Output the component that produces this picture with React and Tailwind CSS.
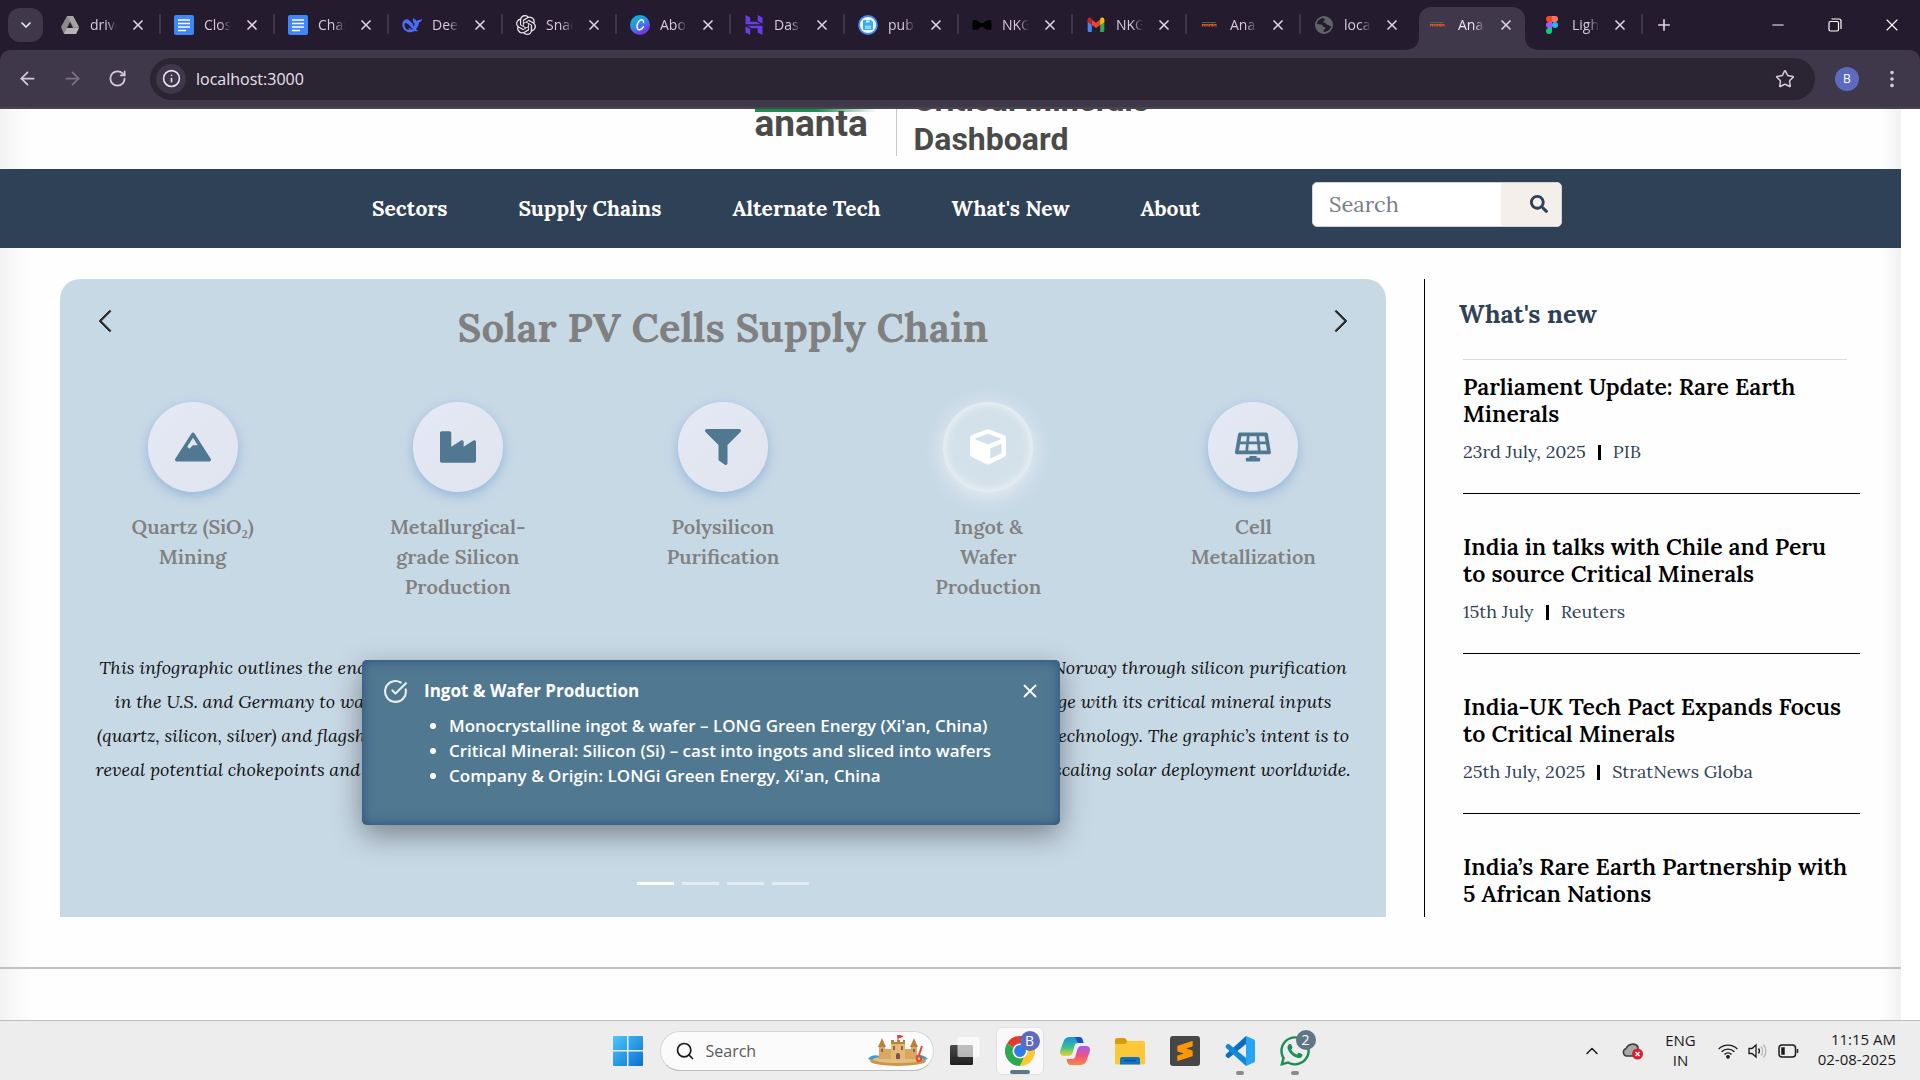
import React from "react";
import { FaCube, FaFilter, FaIndustry, FaMountain, FaSearch, FaSolarPanel, FaWhatsapp } from "react-icons/fa";
import { BsChevronLeft, BsChevronRight } from "react-icons/bs";
import { SiHostinger, SiOpenai, SiSublimetext } from "react-icons/si";
import {
  ArrowLeft, ArrowRight, ChevronDown, ChevronUp, CircleCheckBig, EllipsisVertical,
  Info, Minus, Plus, RotateCw, Search, Star, X,
} from "lucide-react";

const SERIF = "font-['Lora','Liberation_Serif',serif]";
const SANS = "font-['Segoe_UI','Open_Sans',sans-serif]";

/* ---------- favicons ---------- */

const DriveIcon = () => (
  <svg viewBox="0 0 20 20" className="size-5">
    <path d="M7 1h6l6 11-3 7H4l-3-7z" fill="#8b8b8b" />
    <path d="M7 1h6l6 11h-5z" fill="#a5a5a3" />
    <path d="M4 19 7 13h12l-3 6z" fill="#b5b5b2" />
    <path d="M10 7l3 6H7z" fill="#241c2e" />
  </svg>
);

const DocsIcon = () => (
  <svg viewBox="0 0 20 20" className="size-5">
    <rect width="20" height="20" rx="2" fill="#4285f4" />
    <path d="M4 5h12M4 8.500h12M4 12h12M4 15.500h8" stroke="#fff" strokeWidth="1.700" />
  </svg>
);

const WhaleIcon = () => (
  <svg viewBox="0 0 24 24" className="size-5" fill="#4d6bfe">
    <path d="M23.700 4.900c-.3-.1-.4.1-.5.200-.7.700-1.500 1-2.500.900-1.400-.1-2.600.4-3.700 1.500-.2-1.300-1-2.100-2.100-2.600-.6-.3-.9-.7-1-1.300-.1-.3-.3-.2-.4 0-.5 1-.7 2-.5 3.100.1 1.500.8 2.700 2 3.500.2.100.2.200.1.400l-.3 1c-1.100-.5-2-1.100-2.800-1.900C10.600 8.300 9.200 6.600 7.500 5.300 4.600 4.200 1.500 6 .6 9.500c-1.100 4.600 1.600 9.100 5.600 10.500 3 1.100 6.100.6 8.700-.9.600.3 2.400.6 3.500.3.800-.2.800-1 .5-1.100-2.300-1.100-1.800-.7-2.300-1.100 1.200-1.400 3-3.200 3.700-7.500.1-.4 0-.6 0-.8 1.800-.2 3.100-1.700 3.600-3.200.1-.4.100-.7-.2-.8zM12 17.600c-2.300-1.900-3.500-2.500-4-2.400-.4 0-.3.500-.2.800.2.800.8 1.400 1.200 2-2.400.3-4.500-1.400-5.400-3.600C2.800 12.200 3 9.900 4 9.500c2.500-.2 5.600 3.300 8.800 7.300.1.500-.3.900-.8.800zm1.400-5.700c-.6-.1-.7-.9-.2-1.200 1.200 0 1.700 1.300 1.600 2.400-.1 1-1.100.8-1.100.1z" />
  </svg>
);

const CanvaIcon = () => (
  <svg viewBox="0 0 20 20" className="size-5">
    <defs>
      <linearGradient id="canva" x1="0" y1="0" x2=".6" y2="1">
        <stop offset="0" stopColor="#00c4cc" />
        <stop offset=".5" stopColor="#2f8fe6" />
        <stop offset="1" stopColor="#7d2ae8" />
      </linearGradient>
    </defs>
    <circle cx="10" cy="10" r="10" fill="url(#canva)" />
    <path d="M13.500 7.500c.5-3-2-3.500-4-1.800-2.500 2.200-3.500 7-1.500 8.600 1.600 1.200 4-.3 5.300-2.500" fill="none" stroke="#fff" strokeWidth="1.500" strokeLinecap="round" />
  </svg>
);

const DiskIcon = () => (
  <svg viewBox="0 0 20 20" className="size-5">
    <circle cx="10" cy="10" r="9" fill="#f4f4f4" stroke="#3f8cf0" strokeWidth="1.800" />
    <path d="M5 6a1 1 0 0 1 1-1h7l2 2v7a1 1 0 0 1-1 1H6a1 1 0 0 1-1-1z" fill="#35aef0" />
    <path d="M8 5.500h3.500v2H8z" fill="#e3f5fd" />
    <path d="M7 10.500h6V14H7z" fill="#8fd3f7" />
  </svg>
);

const BowTieIcon = () => (
  <svg viewBox="0 0 20 20" className="size-5">
    <path d="M1 5c3-.5 6 1 8 3h2c2-2 5-3.500 8-3 .8 3 .8 7 0 10-3 .5-6-1-8-3H9c-2 2-5 3.500-8 3-.8-3-.8-7 0-10z" fill="#000" />
  </svg>
);

const GmailIcon = () => (
  <svg viewBox="0 0 24 24" className="size-5">
    <path d="M2 6v13a1.500 1.500 0 0 0 1.500 1.500H7V10z" fill="#4285f4" />
    <path d="M22 6v13a1.500 1.500 0 0 1-1.500 1.500H17V10z" fill="#34a853" />
    <path d="M7 5.500V12l5 3.700 5-3.700V5.500l-5 3.800z" fill="#ea4335" />
    <path d="M2 5.500c0-2.300 2.500-3.100 4-2l1 .8V12L2 8.300z" fill="#c5221f" />
    <path d="M22 5.500c0-2.300-2.500-3.100-4-2l-1 .8V12l5-3.700z" fill="#fbbc04" />
  </svg>
);

const AnantaIcon = () => (
  <svg viewBox="0 0 20 20" className="size-5">
    <path d="M2 7.500h14" stroke="#1f7a4a" strokeWidth="1" />
    <path d="M2.500 11.500v-2h2v2m1.500 0v-2h2v2m1.500 0v-2h2v2m1-3v3m1.500 0v-2h2v2" fill="none" stroke="#d9532c" strokeWidth="1.200" />
  </svg>
);

const GlobeIcon = () => (
  <svg viewBox="0 0 20 20" className="size-5">
    <circle cx="10" cy="10" r="9" fill="#5f6368" />
    <path d="M9 3c-3 .5-6 3-6 6l4 .5c2 .3 1.500 2.500 3.500 2.500 1.500.2 1 2-.5 2.500l-.5 2.500c4 0 7-2.500 7.500-6-2 .5-2.500-1.500-4-1.500s-1-2-3-2c-1 0-1.500-1 0-1.500S11 4 9 3z" fill="#241c2e" />
  </svg>
);

const FigmaIcon = () => (
  <svg viewBox="0 0 20 20" className="size-5">
    <path d="M10 1H7a3 3 0 0 0 0 6h3z" fill="#f24e1e" />
    <path d="M10 1h3a3 3 0 0 1 0 6h-3z" fill="#ff7262" />
    <path d="M10 7H7a3 3 0 0 0 0 6h3z" fill="#a259ff" />
    <circle cx="13" cy="10" r="3" fill="#1abcfe" />
    <path d="M10 13H7a3 3 0 1 0 3 3z" fill="#0acf83" />
  </svg>
);

const TABS = [
  { title: "drive", icon: <DriveIcon /> },
  { title: "Closi", icon: <DocsIcon /> },
  { title: "Chat", icon: <DocsIcon /> },
  { title: "Deep", icon: <WhaleIcon /> },
  { title: "Snac", icon: <SiOpenai className="size-5 text-[#e8e4ea]" /> },
  { title: "Abo", icon: <CanvaIcon /> },
  { title: "Das", icon: <SiHostinger className="size-5 text-[#673de6]" /> },
  { title: "pub", icon: <DiskIcon /> },
  { title: "NKG", icon: <BowTieIcon /> },
  { title: "NKG", icon: <GmailIcon /> },
  { title: "Ana", icon: <AnantaIcon /> },
  { title: "local", icon: <GlobeIcon /> },
  { title: "Ana", icon: <AnantaIcon />, active: true },
  { title: "Light", icon: <FigmaIcon /> },
];

function Tab({ title, icon, active, divider }) {
  return (
    <div className="relative flex h-full w-[114px] items-center pt-[7px]">
      {active && (
        <svg viewBox="0 0 136 43" className="absolute -left-[11px] bottom-0 h-[43px] w-[136px]" fill="#3f374a">
          <path d="M0 43c10 0 15-5 15-14V13C15 5 20 0 28 0h80c8 0 13 5 13 13v16c0 9 5 14 15 14z" />
        </svg>
      )}
      <div className="relative flex h-9 w-full items-center pb-[7px] pl-[13px]">
        <span className="shrink-0">{icon}</span>
        <span className={`ml-[10px] w-[27px] overflow-hidden text-[14px] leading-5 whitespace-nowrap [mask-image:linear-gradient(to_right,black_60%,transparent)] ${active ? "text-[#eee6f5]" : "text-[#d5cbdc]"}`}>
          {title}
        </span>
        <button aria-label={`Close ${title}`} className="ml-[13px] flex size-4 items-center justify-center text-[#ddd3e4]">
          <X size={16} strokeWidth={2.500} />
        </button>
      </div>
      {divider && <span className="absolute top-[14px] right-0 h-5 w-[2px] rounded bg-[#3f374a]" />}
    </div>
  );
}

function Browser() {
  return (
    <div className={`${SANS} bg-[#241c2e]`}>
      <div className="flex h-[50px] items-start">
        <button aria-label="Search tabs" className="mt-2 mr-1 ml-2 flex h-[34px] w-[35px] shrink-0 items-center justify-center rounded-xl bg-[#3f374a] text-[#eee6f5]">
          <ChevronDown size={16} strokeWidth={2.500} />
        </button>
        <div className="flex h-full shrink-0">
          {TABS.map((t, i) => (
            <Tab key={i} {...t} divider={i !== 11 && i !== 12} />
          ))}
        </div>
        <button aria-label="New tab" className="mt-4 ml-3 text-[#ddd3e4]">
          <Plus size={18} strokeWidth={2.200} />
        </button>
        <div className="flex h-full flex-1 justify-end text-white">
          <button aria-label="Minimize" className="flex w-[57px] items-center justify-center">
            <Minus size={18} strokeWidth={1.300} />
          </button>
          <button aria-label="Restore" className="flex w-[57px] items-center justify-center">
            <svg viewBox="0 0 14 14" className="size-[14px]" fill="none" stroke="currentColor" strokeWidth="1.200">
              <rect x="1" y="3.500" width="9.500" height="9.500" rx="1.500" />
              <path d="M3.500 1H11a2 2 0 0 1 2 2v8" />
            </svg>
          </button>
          <button aria-label="Close window" className="flex w-[57px] items-center justify-center">
            <X size={20} strokeWidth={1.300} />
          </button>
        </div>
      </div>

      <div className="flex h-[59px] items-center rounded-t-[10px] border-b-2 border-[#4a4450] bg-[#3f374a] px-[17px] text-[#d5cbdc]">
        <button aria-label="Back"><ArrowLeft size={21} strokeWidth={2} /></button>
        <button aria-label="Forward" className="ml-[24px] text-[#7b7284]"><ArrowRight size={21} strokeWidth={2} /></button>
        <button aria-label="Reload" className="ml-[25px]"><RotateCw size={19} strokeWidth={2.200} /></button>
        <div className="ml-[23px] flex h-[42px] flex-1 items-center rounded-full bg-[#2b2433] pr-[20px] pl-[6px]">
          <button aria-label="Site information" className="flex size-[30px] items-center justify-center rounded-full bg-[#3f374a] text-[#eee6f5]">
            <Info size={19} strokeWidth={2} />
          </button>
          <input aria-label="Address" defaultValue="localhost:3000" className="ml-[10px] min-w-0 flex-1 bg-transparent text-[16px] text-[#e9e2ee] outline-none" />
          <button aria-label="Bookmark"><Star size={20} strokeWidth={1.800} /></button>
        </div>
        <button aria-label="Profile" className="ml-5 flex size-6 items-center justify-center rounded-full bg-[#5c6bc0] text-[12px] text-white">B</button>
        <button aria-label="Menu" className="ml-[22px]"><EllipsisVertical size={22} /></button>
      </div>
    </div>
  );
}

/* ---------- site ---------- */

function Header() {
  return (
    <header className="flex h-[60px] items-end justify-center overflow-hidden">
      <div className="mb-[13px] ml-[38px] flex h-[80px] w-[430px] shrink-0 items-end">
        <div className="mb-[20px] w-[122px]">
          <div className="h-[2px] bg-gradient-to-r from-[#e8935a] via-[#e8935a] to-transparent" />
          <div className="h-[3px] bg-gradient-to-r from-[#12924a] via-[#12924a] to-transparent" />
          <div className="font-['Roboto',sans-serif] text-[37px] leading-[24px] font-bold text-[#4a4a48]">ananta</div>
        </div>
        <div className="ml-[19px] h-full w-px bg-[#c9c9c9]" />
        <h1 className="-mb-[3px] ml-[17px] font-['Roboto',sans-serif] text-[32px] leading-[39px] font-bold text-[#4a4a48]">
          Critical Minerals
          <br />
          Dashboard
        </h1>
      </div>
    </header>
  );
}

const NAV = ["Sectors", "Supply Chains", "Alternate Tech", "What's New", "About"];

function Nav() {
  return (
    <nav className={`${SERIF} flex h-[79px] items-center justify-center bg-[#2f4156]`}>
      <div className="ml-[33px] flex items-center">
        <div className="flex gap-[71px] text-[21px] font-bold text-white">
          {NAV.map((n) => (
            <a key={n} href="#" className="whitespace-nowrap">{n}</a>
          ))}
        </div>
        <form className="mb-[9px] ml-[112px] flex h-[45px] w-[250px] overflow-hidden rounded-[5px] border border-[#ced4da] bg-white" onSubmit={(e) => e.preventDefault()}>
          <input aria-label="Search" placeholder="Search" className="w-[188px] px-4 text-[22px] outline-none placeholder:text-[#757d85]" />
          <button aria-label="Submit search" className="flex flex-1 items-center justify-center bg-[#f5efeb] pl-4 text-[#2f4156]">
            <FaSearch size={18} />
          </button>
        </form>
      </div>
    </nav>
  );
}

const STAGES = [
  { Icon: FaMountain, lines: ["Quartz (SiO₂)", "Mining"] },
  { Icon: FaIndustry, lines: ["Metallurgical-", "grade Silicon", "Production"] },
  { Icon: FaFilter, lines: ["Polysilicon", "Purification"] },
  { Icon: FaCube, lines: ["Ingot &", "Wafer", "Production"], active: true },
  { Icon: FaSolarPanel, lines: ["Cell", "Metallization"] },
];

const DESCRIPTION = [
  "This infographic outlines the end-to-end solar PV supply chain, tracing the paths of materials from quartz mining in Norway through silicon purification",
  "in the U.S. and Germany to wafer and cell production in China and beyond the region, and so it pairs each single stage with its critical mineral inputs",
  "(quartz, silicon, silver) and flagship companies, so that readers can readily see who controls each principal step of the technology. The graphic’s intent is to",
  "reveal potential chokepoints and strategic dependencies, and helps to inform both policy and investment decisions for scaling solar deployment worldwide.",
];

function Popup() {
  return (
    <div
      role="dialog"
      aria-label="Ingot & Wafer Production"
      className={`${SANS} absolute top-[381px] left-[302px] h-[165px] w-[698px] rounded-[5px] bg-[#507891] pt-[18px] pr-[19px] pl-[21px] font-semibold text-white shadow-[0_10px_30px_rgba(0,0,0,0.4),inset_0_0_12px_#2a5080]`}
    >
      <div className="flex items-center">
        <CircleCheckBig size={25} strokeWidth={2} className="text-[#e8eef2]" />
        <h3 className="ml-4 flex-1 text-[17px] leading-[26px] font-bold">Ingot &amp; Wafer Production</h3>
        <button aria-label="Close"><X size={22} strokeWidth={2} /></button>
      </div>
      <ul className="mt-[9px] list-disc pl-[66px] text-[17px] leading-[25px]">
        <li>Monocrystalline ingot &amp; wafer – LONG Green Energy (Xi'an, China)</li>
        <li>Critical Mineral: Silicon (Si) – cast into ingots and sliced into wafers</li>
        <li>Company &amp; Origin: LONGi Green Energy, Xi'an, China</li>
      </ul>
    </div>
  );
}

function Carousel() {
  return (
    <section className={`${SERIF} relative flex min-h-[638px] flex-col rounded-t-[20px] bg-[#c8d9e6]`}>
      <div className="flex items-start justify-between px-[32px] pt-[20px]">
        <button aria-label="Previous" className="mt-[9px] text-[#2a2a2a]"><BsChevronLeft size={26} className="stroke-current stroke-[0.6]" /></button>
        <h2 className="pt-[3px] text-[40px] leading-[52px] font-bold text-[#808080]">Solar PV Cells Supply Chain</h2>
        <button aria-label="Next" className="mt-[9px] text-[#2a2a2a]"><BsChevronRight size={26} className="stroke-current stroke-[0.6]" /></button>
      </div>
      <div className="mt-[48px] grid grid-cols-5">
        {STAGES.map(({ Icon, lines, active }) => (
          <button key={lines[0]} className="flex flex-col items-center">
            <span
              className={
                active
                  ? "flex size-[90px] items-center justify-center rounded-full bg-[#d3e1ea] text-white shadow-[0_4px_20px_rgba(255,255,255,0.6),inset_0_0_12px_rgba(255,255,255,0.8)]"
                  : "flex size-[90px] items-center justify-center rounded-full bg-gradient-to-br from-[#e4e9f6] to-[#e0e4ed] text-[#507891] shadow-[0_4px_12px_rgba(100,150,210,0.5)]"
              }
            >
              <Icon size={36} />
            </span>
            <span className="mt-5 text-[20px] leading-[30px] font-semibold text-[#808080]">
              {lines.map((l) => (
                <span key={l} className="block">{l}</span>
              ))}
            </span>
          </button>
        ))}
      </div>
      <p className="absolute top-[372px] right-0 left-0 text-center text-[18px] leading-[34px] text-[#111] italic">
        {DESCRIPTION.map((l) => (
          <span key={l} className="block whitespace-nowrap">{l}</span>
        ))}
      </p>
      <div className="mt-auto mb-[32px] flex justify-center gap-2">
        {[0, 1, 2, 3].map((i) => (
          <button key={i} aria-label={`Slide ${i + 1}`} className={`h-[3px] w-[37px] ${i === 0 ? "bg-white" : "bg-white/50"}`} />
        ))}
      </div>
      <Popup />
    </section>
  );
}

const NEWS = [
  { title: ["Parliament Update: Rare Earth", "Minerals"], date: "23rd July, 2025", source: "PIB" },
  { title: ["India in talks with Chile and Peru", "to source Critical Minerals"], date: "15th July", source: "Reuters" },
  { title: ["India-UK Tech Pact Expands Focus", "to Critical Minerals"], date: "25th July, 2025", source: "StratNews Globa" },
  { title: ["India’s Rare Earth Partnership with", "5 African Nations"] },
];

function News() {
  return (
    <aside className={`${SERIF} border-l border-black pr-[41px] pl-[38px]`}>
      <h2 className="-ml-1 pt-[18px] text-[25px] leading-[34px] font-bold text-[#2f4156]">What's new</h2>
      <div className="mt-[28px] mr-[13px] h-px bg-[#dcdcdc]" />
      {NEWS.map((n, i) => (
        <article key={n.date || i} className={`${i === 0 ? "pt-[13px]" : "pt-[39px]"} ${n.date ? "border-b border-black pb-[29px]" : ""}`}>
          <h3 className="text-[23px] leading-[27px] font-semibold text-black">
            {n.title.map((t) => (
              <span key={t} className="block whitespace-nowrap">{t}</span>
            ))}
          </h3>
          {n.date && (
            <div className="mt-[13px] flex items-center text-[18px] leading-[24px] text-[#2f4156]">
              <span>{n.date}</span>
              <span className="mx-3 h-[15px] w-[3px] bg-black" />
              <span>{n.source}</span>
            </div>
          )}
        </article>
      ))}
    </aside>
  );
}

/* ---------- taskbar ---------- */

const WindowsIcon = () => (
  <svg viewBox="0 0 30 30" className="size-[30px]">
    <defs>
      <linearGradient id="win" x1="0" y1="0" x2="1" y2="1" gradientUnits="objectBoundingBox">
        <stop offset="0" stopColor="#4cc8fa" />
        <stop offset="1" stopColor="#0a6fd0" />
      </linearGradient>
    </defs>
    <path d="M0 1a1 1 0 0 1 1-1h13v14H0zM15.500 0H29a1 1 0 0 1 1 1v13H15.500zM0 15.500h14V30H1a1 1 0 0 1-1-1zM15.500 15.500H30V29a1 1 0 0 1-1 1H15.500z" fill="url(#win)" />
  </svg>
);

const CastleIcon = () => (
  <svg viewBox="0 0 60 31" className="h-[31px] w-[60px]">
    <path d="M0 24c4-5 10-4 14-2l32-1c5-2 10-1 14 3-6 3-50 4-60 0z" fill="#3b9bd8" />
    <ellipse cx="30" cy="26" rx="28" ry="5" fill="#c9974f" />
    <ellipse cx="30" cy="24.500" rx="25" ry="3.500" fill="#e6bd7c" />
    <path d="M11 12h6v12h-6zM43 12h6v12h-6zM17 14h26v10H17z" fill="#d7a763" />
    <path d="M23 8h14v16H23z" fill="#e5b974" />
    <path d="M14 3l4 9h-8zM46 3l4 9h-8zM23 5h3v2h3V5h3v2h3V5h2v4H23z" fill="#bb823d" />
    <path d="M30 5V0M30 0l5 1.500L30 3z" stroke="#e03c2b" fill="#e03c2b" />
    <path d="M28 24v-4a2 2 0 0 1 4 0v4z" fill="#7a5060" />
    <path d="M25 11h2v4h-2zM33 11h2v4h-2zM13 14h2v3h-2zM45 14h2v3h-2z" fill="#8b6252" />
    <path d="M54 11l-3 9m0 0c-3 1-3 6 0 6s3-4 0-6z" stroke="#e14b2e" strokeWidth="2" fill="none" />
  </svg>
);

const TaskViewIcon = () => (
  <svg viewBox="0 0 30 30" className="size-[30px]">
    <defs>
      <linearGradient id="tv" x1="0" y1="0" x2="0" y2="1">
        <stop offset="0" stopColor="#4a4a4a" />
        <stop offset="1" stopColor="#1f1f1f" />
      </linearGradient>
    </defs>
    <rect x="0" y="9" width="23" height="20" rx="1.500" fill="url(#tv)" />
    <rect x="7.500" y="1" width="22" height="20" rx="1.500" fill="#fff" opacity=".65" />
  </svg>
);

const ChromeIcon = () => (
  <svg viewBox="0 0 48 48" className="size-[30px]">
    <path d="M24 24 3.200 12A24 24 0 0 1 44.800 12H24z" fill="#e33b2e" />
    <path d="M24 24 3.200 12A24 24 0 0 0 24 48l10.400-18z" fill="#2da94f" />
    <path d="M24 24h10.400L24 48A24 24 0 0 0 44.800 12H24z" fill="#fcc934" />
    <circle cx="24" cy="24" r="12" fill="#fff" />
    <circle cx="24" cy="24" r="9.500" fill="#2f7de9" />
  </svg>
);

const CopilotIcon = () => (
  <svg viewBox="0 0 30 30" className="size-[30px]">
    <defs>
      <linearGradient id="cpA" x1="0" y1="0" x2="0" y2="1">
        <stop offset="0" stopColor="#1e8de8" />
        <stop offset=".55" stopColor="#3cc08a" />
        <stop offset="1" stopColor="#f2d22e" />
      </linearGradient>
      <linearGradient id="cpB" x1="0" y1="1" x2="0" y2="0">
        <stop offset="0" stopColor="#f98a3c" />
        <stop offset=".5" stopColor="#f04f85" />
        <stop offset="1" stopColor="#a65bee" />
      </linearGradient>
    </defs>
    <path d="M10 1h9c3 0 3.500 2 4.500 6H18c-2 0-3 1-3.500 3l-2 7c-.7 2-2 3-4 3H4c-4 0-4.500-3-3.500-6.500l3-8C4.500 2.500 6.500 1 10 1z" fill="url(#cpA)" />
    <path d="M15 1h4c3 0 3.500 2 4.500 6H18z" fill="#1b4fc0" />
    <path d="M20 29h-9c-3 0-3.500-2-4.500-6H12c2 0 3-1 3.500-3l2-7c.7-2 2-3 4-3H26c4 0 4.500 3 3.500 6.500l-3 8C25.500 27.500 23.500 29 20 29z" fill="url(#cpB)" />
  </svg>
);

const FolderIcon = () => (
  <svg viewBox="0 0 30 30" className="size-[30px]">
    <path d="M0 4a2 2 0 0 1 2-2h8l3 4h-1v6H0z" fill="#d99b12" />
    <path d="M0 8h10l3-3h15a2 2 0 0 1 2 2v20a1.500 1.500 0 0 1-1.500 1.500h-27A1.500 1.500 0 0 1 0 27z" fill="#fcc838" />
    <path d="M5 28.500V23a2 2 0 0 1 2-2h16a2 2 0 0 1 2 2v5.500z" fill="#1173c4" />
    <path d="M9 24.500h12" stroke="#0a4f94" strokeWidth="1.500" />
  </svg>
);

const SublimeIcon = () => (
  <span className="flex size-[30px] items-center justify-center rounded-[3px] bg-[#474747]">
    <SiSublimetext size={20} color="#ff9800" />
  </span>
);

const VsCodeIcon = () => (
  <svg viewBox="0 0 30 30" className="size-[30px]">
    <path d="M21 0 29 3.500a2 2 0 0 1 1 1.800v19.400a2 2 0 0 1-1 1.800L21 30z" fill="#27a5f2" />
    <path d="M21 0v8L4 22l-1 .2L.6 20.300v-1.800z" fill="#0a6fc2" />
    <path d="M21 30v-8L4 8l-1-.2L.6 9.700v1.800z" fill="#1287d8" />
  </svg>
);

function TaskButton({ label, children, tile, mark, badge, badgeColor }) {
  return (
    <button
      aria-label={label}
      className={`relative flex size-12 items-center justify-center rounded-md ${tile ? "border border-[#e2e2e2] bg-[#f9f9f9]" : ""}`}
    >
      {children}
      {badge && (
        <span className={`absolute top-[3px] right-[3px] flex size-5 items-center justify-center rounded-full text-[14px] leading-none text-white ${badgeColor}`}>
          {badge}
        </span>
      )}
      {mark === "bar" && <span className="absolute bottom-0 h-1 w-5 rounded-full bg-[#5f7686]" />}
      {mark === "dot" && <span className="absolute bottom-0 h-1 w-2 rounded-full bg-[#8a8a8a]" />}
    </button>
  );
}

function Taskbar() {
  return (
    <footer className={`${SANS} flex h-[60px] items-center border-t border-[#bdbdbd] bg-[#ededed] text-[#1b1b1b]`}>
      <div className="flex-1" />
      <div className="ml-[35px] flex items-center">
        <button aria-label="Start"><WindowsIcon /></button>
        <label className="mr-[7px] ml-[17px] flex h-[40px] w-[274px] items-center rounded-full border border-[#d6d6d6] border-b-[#bdbdbd] bg-[#fbfbfb] pr-[5px] pl-[14px]">
          <Search size={20} strokeWidth={2} className="shrink-0" />
          <input aria-label="Search Windows" placeholder="Search" className="ml-[11px] min-w-0 flex-1 bg-transparent text-[16px] outline-none placeholder:text-[#5a5a5a]" />
          <CastleIcon />
        </label>
        <div className="flex gap-[7px]">
          <TaskButton label="Task view"><TaskViewIcon /></TaskButton>
          <TaskButton label="Chrome" tile mark="bar" badge="B" badgeColor="bg-[#5c6bc0]"><ChromeIcon /></TaskButton>
          <TaskButton label="Copilot"><CopilotIcon /></TaskButton>
          <TaskButton label="File Explorer"><FolderIcon /></TaskButton>
          <TaskButton label="Sublime Text"><SublimeIcon /></TaskButton>
          <TaskButton label="Visual Studio Code" mark="dot"><VsCodeIcon /></TaskButton>
          <TaskButton label="WhatsApp" mark="dot" badge="2" badgeColor="bg-[#5f7686]"><FaWhatsapp size={34} color="#1a8f57" /></TaskButton>
        </div>
      </div>
      <div className="flex flex-1 items-center justify-end pr-6 text-[15px] leading-5">
        <button aria-label="Hidden icons"><ChevronUp size={20} strokeWidth={1.800} /></button>
        <svg viewBox="0 0 22 18" className="ml-[20px] h-[18px] w-[22px]">
          <path d="M4 14a4 4 0 0 1 0-7.500C6 2 13 0 16 5c1 3-2 5-5 9z" fill="#a8a8a8" stroke="#3b3b3b" strokeWidth="1.500" />
          <circle cx="15.500" cy="12" r="5.500" fill="#d8232f" />
          <path d="M13.500 10l4 4m0-4l-4 4" stroke="#fff" strokeWidth="1.400" />
        </svg>
        <div className="ml-[21px] pb-[2px] text-center">ENG<br />IN</div>
        <svg viewBox="0 0 20 16" className="ml-[22px] h-4 w-5" fill="none" stroke="#1b1b1b" strokeWidth="1.400">
          <path d="M.7 6a13 13 0 0 1 18.600 0M3.600 8.800a9 9 0 0 1 12.800 0M6.500 11.500a5 5 0 0 1 7 0" />
          <circle cx="10" cy="13.800" r="1.200" fill="#1b1b1b" />
        </svg>
        <svg viewBox="0 0 20 16" className="ml-[10px] h-4 w-5" fill="none" stroke="#1b1b1b" strokeWidth="1.300">
          <path d="M1 5.500h3L8 2v12l-4-3.500H1z" />
          <path d="M10.500 5.500a4 4 0 0 1 0 5" />
          <path d="M13 3.500a7 7 0 0 1 0 9M15.500 1.500a10 10 0 0 1 0 13" stroke="#b5b5b5" />
        </svg>
        <svg viewBox="0 0 21 14" className="ml-[10px] h-[14px] w-[21px]" fill="none" stroke="#1b1b1b" strokeWidth="1.500">
          <rect x="1" y="1" width="16.500" height="12" rx="3" />
          <path d="M4 4h2v6H4zM19.500 5v4" fill="#1b1b1b" />
        </svg>
        <div className="ml-[19px] pb-1 text-right">11:15 AM<br />02-08-2025</div>
      </div>
    </footer>
  );
}

export default function App() {
  return (
    <div className="flex h-screen flex-col overflow-hidden bg-white">
      <Browser />
      <div className="min-h-0 flex-1 overflow-hidden pr-[19px]">
        <div className="h-full bg-[linear-gradient(to_right,#f3f3f3,#fefefe_30px,#fefefe_calc(100%-20px),#f1f1f1)]">
          <Header />
          <Nav />
          <main className="mt-[31px] grid grid-cols-[minmax(0,1326fr)_minmax(0,477fr)] gap-x-[38px] pl-[60px]">
            <Carousel />
            <News />
          </main>
          <hr className="mt-[50px] border-t-2 border-[#c0c0c0]" />
        </div>
      </div>
      <Taskbar />
    </div>
  );
}
